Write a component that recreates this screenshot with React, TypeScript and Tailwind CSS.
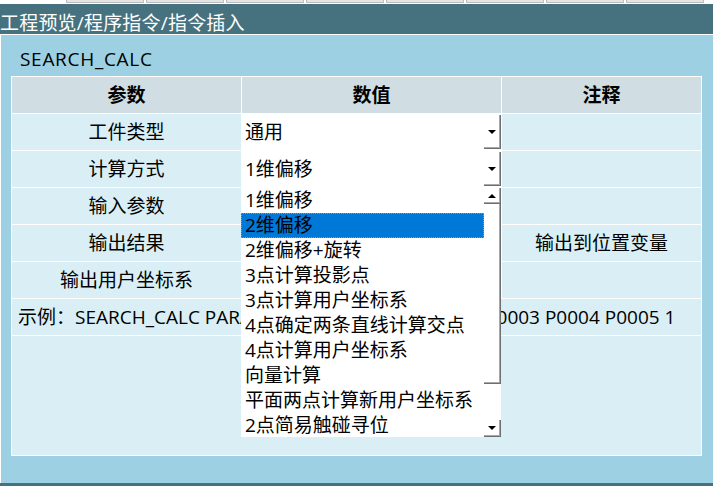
const items = [
  "1维偏移",
  "2维偏移",
  "2维偏移+旋转",
  "3点计算投影点",
  "3点计算用户坐标系",
  "4点确定两条直线计算交点",
  "4点计算用户坐标系",
  "向量计算",
  "平面两点计算新用户坐标系",
  "2点简易触碰寻位",
]

const rows = [
  { name: "工件类型", value: "通用", select: true, note: "" },
  { name: "计算方式", value: "1维偏移", select: true, note: "" },
  { name: "输入参数", value: "", select: false, note: "" },
  { name: "输出结果", value: "", select: false, note: "输出到位置变量" },
  { name: "输出用户坐标系", value: "", select: false, note: "" },
]

const ArrowDown = () => <span className="h-0 w-0 border-x-[4px] border-t-[4px] border-x-transparent border-t-black" />
const ArrowUp = () => <span className="h-0 w-0 border-x-[4px] border-b-[4px] border-x-transparent border-b-black" />

const ComboButton = () => (
  <div className="absolute top-px right-0 bottom-px flex w-[17px] items-center justify-center border-r border-b border-[#6e6e6e] shadow-[inset_-1px_-1px_0_#a8a8a8]">
    <ArrowDown />
  </div>
)

export default function App() {
  return (
    <div className="flex h-[486px] w-[713px] flex-col overflow-hidden bg-[#46727f] font-['Open_Sans','Noto_Sans_CJK_SC',sans-serif] text-[19px] text-black">
      {/* toolbar leftovers */}
      <div className="flex h-[4px] gap-[2px] bg-white pl-[66px]">
        {Array.from({ length: 8 }).map((_, i) => (
          <div key={i} className="h-[3px] w-[78px] border-x border-b border-[#bcbcbc] bg-[#e4e4e4]" />
        ))}
      </div>

      <div className="flex h-[31px] items-center border-b border-white pt-[9px] text-[19px] leading-none tracking-[0.2px] text-white">
        工程预览/程序指令/指令插入
      </div>

      <div className="flex flex-1 flex-col border-l border-white bg-[#9dd0e2]">
        <div className="h-[41px] pt-[12px] pl-[19px] leading-[24px] tracking-[0.7px]">SEARCH_CALC</div>

        <div className="relative ml-[10px] grid w-[691px] grid-cols-[229px_259px_199px] grid-rows-[36px_36px_36px_36px_36px_36px_36px_119px] gap-px border border-white bg-white">
          <div className="flex items-center justify-center bg-[#d0dde2] font-bold">参数</div>
          <div className="flex items-center justify-center bg-[#d0dde2] font-bold">数值</div>
          <div className="flex items-center justify-center bg-[#d0dde2] font-bold">注释</div>

          {rows.map((r) => (
            <div key={r.name} className="contents">
              <div className="flex items-center justify-center bg-[#d9eff5]">{r.name}</div>
              <div className="relative flex items-center bg-white pl-[3px]">
                {r.value}
                {r.select && <ComboButton />}
              </div>
              <div className="flex items-center justify-center bg-[#d9eff5]">{r.note}</div>
            </div>
          ))}

          <div className="col-span-3 flex items-center overflow-hidden bg-[#d9eff5] pl-[6px] whitespace-nowrap">
            示例：SEARCH_CALC PARAM 0 1 P0000 P0001 P0002 P0003 P0004 P0005 1
          </div>
          <div className="col-span-3 bg-[#d9eff5]" />

          {/* open drop-down list */}
          <div className="absolute top-[111px] left-[229px] flex h-[249px] w-[260px] bg-white">
            <div className="flex w-[243px] flex-col">
              {items.map((it, i) => (
                <div
                  key={it}
                  className={`flex h-[25px] shrink-0 items-center pl-[4px] whitespace-nowrap ${
                    i === 1 ? "bg-[#0078d7] outline-1 -outline-offset-1 outline-[#d08a40] outline-dotted" : ""
                  }`}
                >
                  {it}
                </div>
              ))}
            </div>
            <div className="flex w-[17px] flex-col">
              <div className="flex h-[16px] items-center justify-center border-r border-b border-[#6e6e6e] shadow-[inset_-1px_-1px_0_#a8a8a8]">
                <ArrowUp />
              </div>
              <div className="h-[180px] border-r border-b border-[#6e6e6e] shadow-[inset_-1px_-1px_0_#a8a8a8]" />
              <div className="flex-1" />
              <div className="flex h-[17px] items-center justify-center border-r border-b border-[#6e6e6e] shadow-[inset_-1px_-1px_0_#a8a8a8]">
                <ArrowDown />
              </div>
            </div>
          </div>
        </div>
      </div>
      <div className="h-[3px] shrink-0" />
    </div>
  )
}
